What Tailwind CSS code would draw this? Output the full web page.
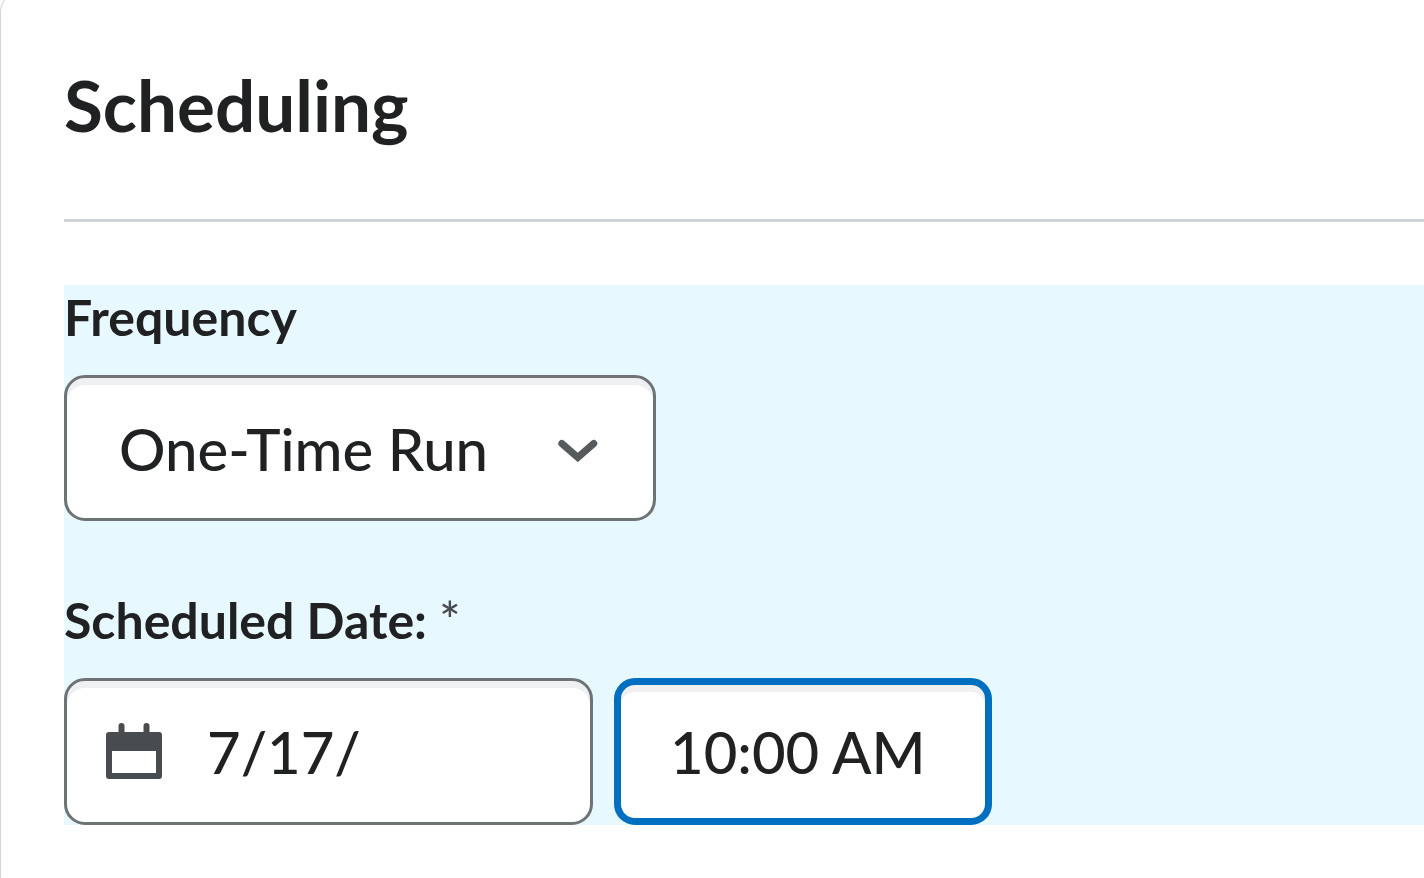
<!DOCTYPE html>
<html lang="en">
  <head>
    <meta charset="UTF-8" />
    <title>Scheduling</title>
    <meta name="viewport" content="width=device-width, initial-scale=1.0" />
    <script src="https://cdn.jsdelivr.net/npm/@tailwindcss/browser@4"></script>
  </head>
  <body class="bg-white overflow-hidden font-[Lato,sans-serif] text-[#202122]">
    <main
      class="-mt-2 min-h-[calc(100vh+8px)] rounded-tl-[20px] border-t border-l border-[#cdd5d8] pl-[63px]"
    >
      <h1
        class="border-b-3 border-[#cdd5d8] pt-[67px] pb-[69px] text-[71px] leading-[90px] font-bold"
      >
        Scheduling
      </h1>

      <form class="mt-[63px] bg-[#e8f8ff]">
        <label for="frequency" class="block text-[50px] leading-[64px] font-bold"
          >Frequency</label
        >
        <div class="relative mt-[26px] w-[592px] max-w-full">
          <select
            id="frequency"
            class="h-[146px] w-full appearance-none rounded-[21px] border-3 border-[#6e7376] bg-white pl-[52px] text-[58px] font-medium shadow-[inset_0_7px_0_0_#eff0f2] outline-none"
          >
            <option selected>One-Time Run</option>
            <option>Recurring</option>
          </select>
          <svg
            class="pointer-events-none absolute top-[63px] right-[57px] h-6 w-[42px]"
            viewBox="0 0 42 24"
            fill="none"
            stroke="#565a5c"
            stroke-width="7"
            stroke-linecap="round"
            aria-hidden="true"
          >
            <path d="M4.800 5.500 L20.800 19.500 L36.800 5.500" />
          </svg>
        </div>

        <label
          for="date"
          class="mt-[67px] block text-[50px] leading-[64px] font-bold"
          >Scheduled Date:
          <span class="font-medium text-[#494c4e]">*</span></label
        >
        <div class="mt-[26px] flex gap-[21px]">
          <div class="relative w-[529px]">
            <input
              id="date"
              type="text"
              value="7/17/"
              class="h-[147px] w-full rounded-[21px] border-3 border-[#6e7376] bg-white pl-[140px] text-[58px] font-medium shadow-[inset_0_7px_0_0_#eff0f2] outline-none"
            />
            <svg
              class="pointer-events-none absolute top-[45px] left-[42px] h-14 w-14"
              viewBox="0 0 56 56"
              fill="#494c4e"
              aria-hidden="true"
            >
              <path
                fill-rule="evenodd"
                d="M12.500 9V3a3 3 0 0 1 6 0v6h19V3a3 3 0 0 1 6 0v6H53a3 3 0 0 1 3 3v41a3 3 0 0 1-3 3H3a3 3 0 0 1-3-3V12a3 3 0 0 1 3-3ZM6 28v22h44V28Z"
              />
            </svg>
          </div>
          <input
            type="text"
            value="10:00 AM"
            aria-label="Scheduled time"
            class="h-[147px] w-[378px] rounded-[21px] border-7 border-[#006fbf] bg-white pl-[49px] text-[58px] font-medium shadow-[inset_0_7px_0_0_#eff0f2] outline-none"
          />
        </div>
      </form>
    </main>
  </body>
</html>
